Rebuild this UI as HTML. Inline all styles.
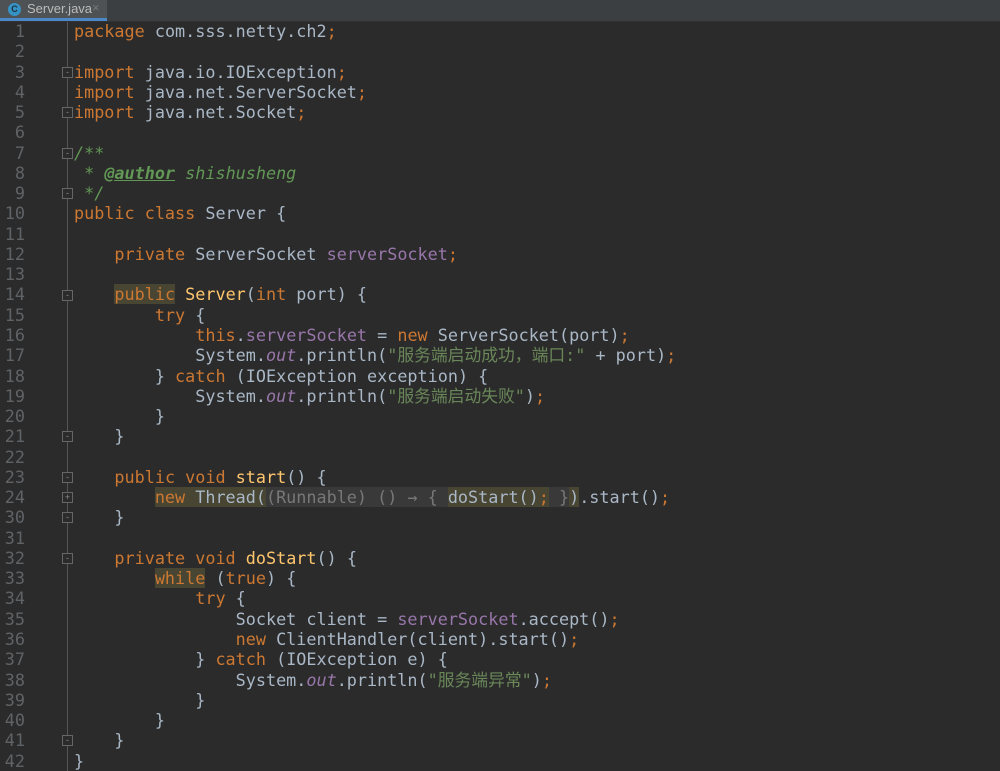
<!DOCTYPE html><html><head><style>
body{margin:0;width:1000px;height:771px;background:#2b2b2b;overflow:hidden;position:relative;font-family:"Liberation Mono","Noto Sans CJK SC",monospace;}
#tabs{position:absolute;left:0;top:0;width:1000px;height:21px;background:#3c3f41;border-bottom:1px solid #323232}
#tab{position:absolute;left:0;top:0;width:107px;height:18px;background:#4e5254;border-bottom:3px solid #4a88c7;font:13px "Liberation Sans",sans-serif;color:#bbbbbb}
#tab .ic{position:absolute;left:8px;top:3px;width:13px;height:13px;border-radius:50%;background:#3592c4;color:#1f2d36;font-size:9px;text-align:center;line-height:13px;font-weight:bold}
#tab .t{position:absolute;left:27px;top:1px}
#tab .x{position:absolute;left:92px;top:0px;color:#777}
#sep{position:absolute;left:67px;top:22px;width:1px;height:749px;background:#555}
#nums,#code{position:absolute;top:21px;margin:0;font-size:16.8px;line-height:20.27px;white-space:pre}
#nums{left:0;width:25px;text-align:right;color:#606366}
#code{left:74px;color:#a9b7c6}
.k{color:#cc7832}.f{color:#9876aa}.s{color:#6a8759}.m{color:#ffc66d}.c{color:#629755;font-style:italic}.i{color:#9876aa;font-style:italic}
.a{color:#629755;font-weight:bold;text-decoration:underline;font-style:italic}
.h{background:#484533}.g{color:#787878}.fb{background:#393939}
.fm{position:absolute;left:62px;width:9px;height:9px;border:1px solid #666;background:#2b2b2b;font:9px/9px sans-serif;color:#888;text-align:center}
</style></head><body>
<div id="tabs"><div id="tab"><span class="ic">C</span><span class="t">Server.java</span><span class="x">×</span></div></div>
<div id="sep"></div>
<pre id="nums">1
2
3
4
5
6
7
8
9
10
11
12
13
14
15
16
17
18
19
20
21
22
23
24
30
31
32
33
34
35
36
37
38
39
40
41
42</pre>
<pre id="code"><span class="k">package</span> com.sss.netty.ch2<span class="k">;</span>

<span class="k">import</span> java.io.IOException<span class="k">;</span>
<span class="k">import</span> java.net.ServerSocket<span class="k">;</span>
<span class="k">import</span> java.net.Socket<span class="k">;</span>

<span class="c">/**</span>
<span class="c"> * <span class="a">@author</span> shishusheng</span>
<span class="c"> */</span>
<span class="k">public class</span> Server {

    <span class="k">private</span> ServerSocket <span class="f">serverSocket</span><span class="k">;</span>

    <span class="k h">public</span> <span class="m">Server</span>(<span class="k">int</span> port) {
        <span class="k">try</span> {
            <span class="k">this</span>.<span class="f">serverSocket</span> = <span class="k">new</span> ServerSocket(port)<span class="k">;</span>
            System.<span class="i">out</span>.println(<span class="s">"服务端启动成功，端口:"</span> + port)<span class="k">;</span>
        } <span class="k">catch</span> (IOException exception) {
            System.<span class="i">out</span>.println(<span class="s">"服务端启动失败"</span>)<span class="k">;</span>
        }
    }

    <span class="k">public void</span> <span class="m">start</span>() {
        <span class="h"><span class="k">new</span> Thread(</span><span class="fb g">(Runnable) () → { </span><span class="h">doStart()<span class="k">;</span></span><span class="fb g"> }</span><span class="h">)</span>.start()<span class="k">;</span>
    }

    <span class="k">private void</span> <span class="m">doStart</span>() {
        <span class="k h">while</span> (<span class="k">true</span>) {
            <span class="k">try</span> {
                Socket client = <span class="f">serverSocket</span>.accept()<span class="k">;</span>
                <span class="k">new</span> ClientHandler(client).start()<span class="k">;</span>
            } <span class="k">catch</span> (IOException e) {
                System.<span class="i">out</span>.println(<span class="s">"服务端异常"</span>)<span class="k">;</span>
            }
        }
    }
}</pre>
<div class="fm" style="top:67px">-</div>
<div class="fm" style="top:107px">-</div>
<div class="fm" style="top:148px">-</div>
<div class="fm" style="top:188px">-</div>
<div class="fm" style="top:290px">-</div>
<div class="fm" style="top:431px">-</div>
<div class="fm" style="top:472px">-</div>
<div class="fm" style="top:492px">+</div>
<div class="fm" style="top:512px">-</div>
<div class="fm" style="top:553px">-</div>
<div class="fm" style="top:735px">-</div>
</body></html>
